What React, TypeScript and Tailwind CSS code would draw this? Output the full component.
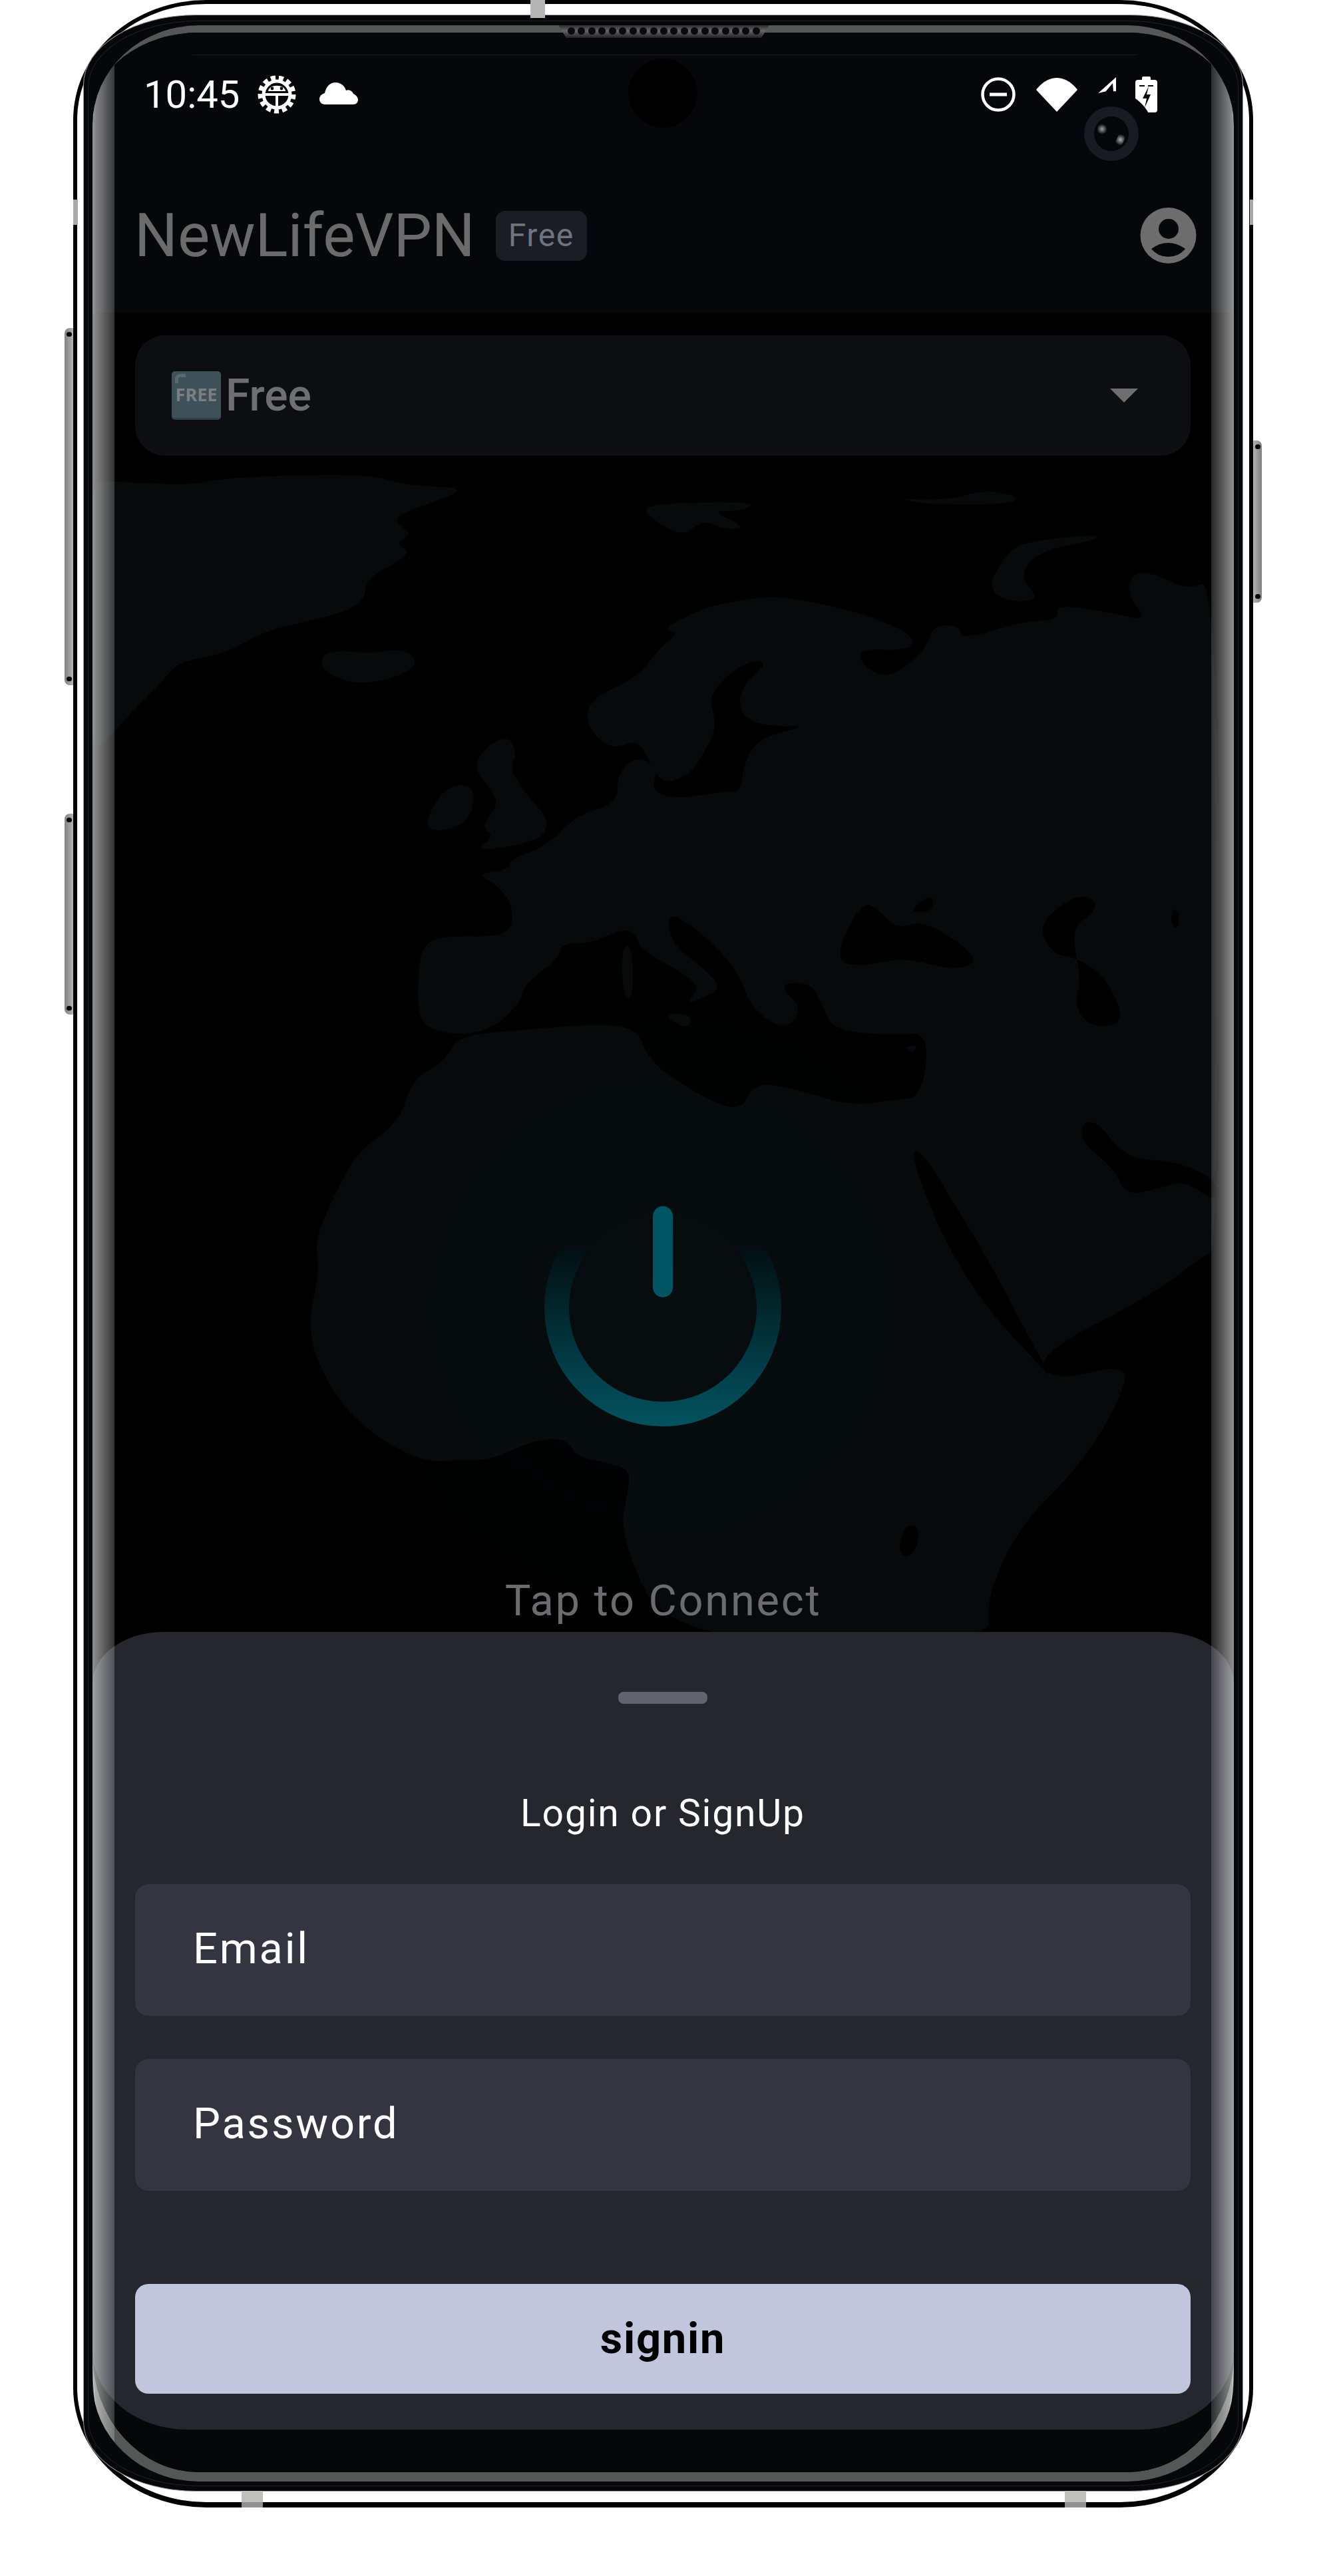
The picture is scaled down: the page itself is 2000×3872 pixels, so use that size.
import React from "react";

const LAND = [
  "632,1422 666,1406 766,1409 772,1364 749,1332 716,1313 766,1307 766,1291 822,1272 867,1224 928,1208 928,1160 961,1135 989,1160 978,1186 1012,1202 1090,1189 1112,1192 1118,1147 1140,1109 1218,1090 1157,1093 1112,1077 1112,1033 1157,994 1118,994 1062,1045 1079,1090 1056,1135 1034,1167 989,1179 961,1109 922,1128 883,1096 883,1052 961,1017 989,975 1023,950 995,947 1034,924 1079,908 1157,895",
  "1224,905 1313,927 1374,956 1369,978 1285,975 1302,1007 1335,1017 1363,1001 1391,975 1402,940 1441,940 1447,962 1536,934 1592,931 1586,908 1670,921 1726,934 1692,892 1704,857 1748,867 1782,886 1830,870",
  "1830,1876 1807,1889 1725,1950 1558,2036 1582,2077 1697,2048 1682,2106 1625,2201 1529,2297 1481,2406 1491,2470",
  "1006,2470 930,2306 945,2235 945,2209 915,2199 865,2189 853,2163 807,2163 738,2194 700,2194 630,2198 534,2138 481,2061 462,1991 481,1908 472,1864 510,1781 539,1730 601,1685 620,1621 668,1596 687,1557",
  "783,1548 955,1535 974,1596 1051,1647 1113,1672 1132,1628 1185,1634 1280,1663 1343,1653 1385,1650 1397,1552",
  "1341,1556 1252,1549 1235,1510 1218,1476 1168,1479 1207,1517 1179,1549 1129,1517 1107,1454 1040,1390 1001,1371 1010,1420 1056,1454 1085,1485 1056,1500 1030,1510 1056,1479 962,1428 956,1403 934,1396 889,1418 844,1418 839,1441 788,1479 783,1505 738,1549 677,1556 632,1540 627,1498",
].join(" ");

const ISLANDS = [
  "130,723 172,723 286,730 342,717 554,712 610,730 710,733 621,765 588,781 621,803 593,816 621,832 549,870 549,902 509,924 398,947 342,982 269,994 242,1026 197,1071 172,1100 130,1140",
  "487,982 515,978 554,982 610,975 629,998 599,1017 543,1029 498,1017 481,998",
  "961,762 1023,755 1140,755 1112,768 1068,768 1123,793 1090,797 1056,781 1028,806 989,787",
  "1347,749 1425,752 1480,736 1531,746 1519,758 1391,758",
  "1653,803 1642,813 1559,829 1531,867 1564,902 1514,905 1483,883 1514,829 1547,813",
  "766,1106 733,1119 710,1154 738,1186 749,1211 722,1243 744,1256 710,1281 811,1265 827,1233 788,1192 766,1154 777,1135",
  "677,1179 716,1182 705,1240 638,1253 649,1211",
  "995,1524 1040,1524 1034,1549",
  "934,1422 950,1422 952,1500 936,1500",
  "1358,1574 1380,1570 1372,1584",
];

const SEAS = [
  "1296,1352 1252,1441 1291,1454 1358,1438 1436,1460 1475,1441 1391,1383 1347,1396 1324,1371",
  "1363,1371 1402,1342 1402,1371",
  "1614,1345 1648,1352 1642,1374 1609,1396 1625,1473 1614,1511 1637,1543 1692,1540 1665,1473 1620,1440 1581,1434 1559,1390",
  "1760,1365 1772,1370 1770,1396 1760,1392",
  "1625,1688 1649,1685 1692,1742 1768,1745 1830,1775 1830,1809 1778,1774 1740,1787 1692,1797 1673,1755 1625,1717",
  "1366,1730 1386,1730 1443,1825 1486,1895 1553,2023 1582,2074 1558,2048 1481,1965 1414,1857",
];

// Rounds the rough coastline: each vertex becomes a curve between edge midpoints.
function smooth(points: string) {
  const p = points.trim().split(/\s+/).map((s) => s.split(",").map(Number));
  const mid = (a: number[], b: number[]) => [(a[0] + b[0]) / 2, (a[1] + b[1]) / 2];
  const start = mid(p[p.length - 1], p[0]);
  let d = `M${start[0]} ${start[1]}`;
  p.forEach((v, i) => {
    const m = mid(v, p[(i + 1) % p.length]);
    d += `Q${v[0]} ${v[1]} ${m[0]} ${m[1]}`;
  });
  return d + "Z";
}

function Gear() {
  return (
    <svg width="58" height="58" viewBox="0 0 58 58" className="ml-[27px] shrink-0">
      <circle cx="29" cy="29" r="25" fill="none" stroke="#fff" strokeWidth="7" strokeDasharray="7 5" />
      <circle cx="29" cy="29" r="20" fill="none" stroke="#fff" strokeWidth="5" />
      <path d="M11 29H47M29 29V48" stroke="#fff" strokeWidth="4" fill="none" />
      <path d="M16 24C17 13 41 13 42 24Z" fill="#fff" />
      <circle cx="22" cy="20" r="2.4" fill="#06070a" />
      <circle cx="36" cy="20" r="2.4" fill="#06070a" />
    </svg>
  );
}

function Cloud() {
  return (
    <svg width="58" height="33" viewBox="0 0 58 33" className="ml-[35px] mt-[-3px] shrink-0">
      <path
        d="M8 33C3 33 0 29 0 25C0 20 4 17 8 16C10 6 16 0 24 0C32 0 38 5 40 12C44 10 49 12 51 17C55 19 58 22 58 26C58 30 55 33 51 33Z"
        fill="#fff"
      />
    </svg>
  );
}

function Dnd() {
  return (
    <svg width="52" height="52" viewBox="0 0 52 52" className="shrink-0">
      <circle cx="26" cy="26" r="23.5" fill="none" stroke="#fff" strokeWidth="4.5" />
      <rect x="13" y="23.5" width="26" height="5" fill="#fff" />
    </svg>
  );
}

function Wifi() {
  return (
    <svg width="62" height="52" viewBox="0 0 62 52" className="ml-[31px] shrink-0">
      <path d="M31 52L0 19C2 16 14 1 31 1C48 1 60 16 62 19Z" fill="#fff" />
    </svg>
  );
}

function Signal() {
  return (
    <svg width="29" height="26" viewBox="0 0 29 26" className="ml-[29px] mb-[26px] shrink-0">
      <path d="M29 0L0 26L13 22L24 9L25 22H29Z" fill="#fff" />
    </svg>
  );
}

function Battery() {
  return (
    <svg width="33" height="54" viewBox="0 0 33 54" className="ml-[29px] shrink-0">
      <rect x="10" y="0" width="13" height="7" rx="2" fill="#fff" />
      <rect x="0" y="5" width="33" height="49" rx="4" fill="#fff" />
      <path d="M6 14H14M19 14H27" stroke="#06070a" strokeWidth="2" />
      <path d="M20 15L11 33H17L14 47L23 27H17Z" fill="#06070a" />
    </svg>
  );
}

function Profile() {
  return (
    <svg width="85" height="84" viewBox="0 0 85 84" className="shrink-0">
      <circle cx="42.5" cy="42" r="42" fill="#6d6d6d" />
      <circle cx="43" cy="32" r="15" fill="#06070a" />
      <path d="M17 62Q42 44 68 62Q58 74 42 74Q27 74 17 62Z" fill="#06070a" />
    </svg>
  );
}

function Power() {
  return (
    <svg width="358" height="356" viewBox="0 0 358 356" className="mt-[1103px] ml-[-1px] shrink-0">
      <defs>
        <linearGradient id="ring" gradientUnits="userSpaceOnUse" x1="0" y1="0" x2="0" y2="356">
          <stop offset="0" stopColor="#021012" stopOpacity="0" />
          <stop offset="0.24" stopColor="#021012" stopOpacity="0" />
          <stop offset="0.26" stopColor="#021012" />
          <stop offset="0.5" stopColor="#02262c" />
          <stop offset="0.8" stopColor="#02424d" />
          <stop offset="1" stopColor="#02535f" />
        </linearGradient>
      </defs>
      <circle cx="179" cy="178" r="159.5" fill="none" stroke="url(#ring)" strokeWidth="37" />
      <rect x="164" y="25" width="30" height="137" rx="15" fill="#005562" />
    </svg>
  );
}

function Field({ label, className }: { label: string; className?: string }) {
  return (
    <div
      className={
        "h-[198px] rounded-[20px] bg-[#343541] flex items-center pl-[87px] text-[65px] tracking-[2.8px] text-white " +
        (className ?? "")
      }
    >
      <span className="mt-[-2px]">{label}</span>
    </div>
  );
}

export default function App() {
  return (
    <div className="relative w-[2000px] h-[3872px] bg-white overflow-hidden font-[Roboto,sans-serif]">
      <div className="relative ml-[110px] w-[1773px] h-[3769px] box-border border-t-[6px] border-x-[6px] border-b-[8px] border-black rounded-[200px/180px] bg-white px-[9px] pt-[16px] pb-[16px]">
        <div className="h-full box-border rounded-[170px/105px] border border-[#9a9a9a] bg-[#06070a] px-[6px] pt-[8px] pb-[7px]">
          <div className="h-full box-border rounded-[165px/100px] border border-[#241f24] px-[6px] pt-[6px] pb-[6px]">
            {/* Glass */}
            <div className="relative h-full box-border overflow-hidden rounded-[160px/150px] bg-[#555756] pt-[11px] pb-[14px]">
              {/* Screen */}
              <div className="relative isolate h-full overflow-hidden flex flex-col bg-black rounded-tl-[160px_124px] rounded-tr-[160px_124px] rounded-bl-[160px_178px] rounded-br-[160px_178px]">
                {/* Map */}
                <svg width="1715" height="3667" viewBox="139 49 1715 3667" className="absolute left-0 top-0">
                  <path d={smooth(LAND)} fill="#060a0b" />
                  {ISLANDS.map((p) => (
                    <path key={p} d={smooth(p)} fill="#060a0b" />
                  ))}
                  {SEAS.map((p) => (
                    <path key={p} d={smooth(p)} fill="#000" />
                  ))}
                  <ellipse cx="1366" cy="2316" rx="13" ry="24" fill="#000" transform="rotate(15 1366 2316)" />
                </svg>
                {/* Glow */}
                <div className="absolute left-[357px] top-[1417px] w-[1000px] h-[1000px] rounded-full bg-[radial-gradient(circle,rgba(0,70,80,0.05),transparent_70%)]" />

                {/* Header */}
                <header className="relative h-[421px] shrink-0 bg-[#06070a] pt-[43px]">
                  <div className="flex h-[100px] items-center justify-between pl-[77px] pr-[115px]">
                    <div className="flex items-center">
                      <span className="text-[58px] leading-[100px] text-white">10:45</span>
                      <Gear />
                      <Cloud />
                    </div>
                    <div className="flex items-center">
                      <Dnd />
                      <Wifi />
                      <Signal />
                      <Battery />
                    </div>
                  </div>
                  <div className="mt-[112px] flex h-[100px] items-center pl-[63px] pr-[56px]">
                    <span className="text-[91px] leading-[100px] text-[#6b6b6b]">NewLifeVPN</span>
                    <span className="ml-[31px] flex h-[75px] w-[137px] items-center justify-center rounded-[14px] bg-[#1a1d24] text-[48px] tracking-[1.6px] text-[#6f7480]">
                      Free
                    </span>
                    <span className="ml-auto">
                      <Profile />
                    </span>
                  </div>
                </header>

                {/* Server dropdown */}
                <div className="relative mt-[34px] ml-[64px] mr-[65px] flex h-[181px] shrink-0 items-center rounded-[45px] bg-[#0d0e12] pl-[55px] pr-[79px]">
                  <div className="relative flex h-[73px] w-[74px] shrink-0 items-center justify-center overflow-hidden rounded-[5px] border-b-[3px] border-[#30424a] bg-[#3f5158] text-[27px] font-bold font-['Noto_Sans',sans-serif] text-[#7b7f7f]">
                    <span className="absolute left-[5px] top-[4px] h-[14px] w-[16px] rounded-tl-[8px] border-l-[5px] border-t-[5px] border-[#566a70]" />
                    FREE
                  </div>
                  <span className="ml-[7px] text-[66px] font-medium text-[#6f6f73]">Free</span>
                  <svg width="42" height="21" viewBox="0 0 42 21" className="ml-auto shrink-0">
                    <path d="M0 0H42L21 21Z" fill="#6f6f6f" />
                  </svg>
                </div>

                {/* Main */}
                <main className="relative flex flex-1 flex-col items-center">
                  <Power />
                  <p className="mt-[222px] text-[65px] leading-[80px] tracking-[2.7px] text-[#6b6b70]">
                    Tap to Connect
                  </p>
                </main>

                {/* Sheet */}
                <section className="relative z-10 h-[1199px] shrink-0 box-border rounded-tl-[107px_77px] rounded-tr-[107px_77px] rounded-bl-[143px_119px] rounded-br-[143px_119px] bg-[#25262e] pl-[64px] pr-[65px] pt-[90px]">
                  <div className="mx-auto h-[18px] w-[134px] rounded-[8px] bg-[#62636d]" />
                  <h2 className="mt-[135px] h-[60px] text-center text-[57px] font-normal leading-[60px] tracking-[1.8px] text-white">
                    Login or SignUp
                  </h2>
                  <Field label="Email" className="mt-[76px]" />
                  <Field label="Password" className="mt-[65px]" />
                  <button className="mt-[140px] flex h-[165px] w-full items-center justify-center rounded-[20px] bg-[#c1c6dd] text-[65px] font-bold tracking-[1.8px] text-black">
                    signin
                  </button>
                </section>
                <div className="mt-[-119px] h-[183px] shrink-0 bg-[#060709]" />

                <div className="absolute left-[150px] right-[145px] top-[33px] h-px bg-[#17181c]" />
                <div className="absolute left-[805px] top-[39px] h-[104px] w-[104px] rounded-full bg-black" />
                <div className="absolute left-[1467px] top-[88px] flex h-[128px] w-[128px] items-center justify-center rounded-full bg-[#05060a]">
                  <div className="relative flex h-[82px] w-[82px] items-center justify-center rounded-full bg-[#1a1b22]">
                    <div className="relative h-[52px] w-[52px] rounded-full bg-[#05060a]">
                      <div className="absolute left-[5px] top-[11px] h-[16px] w-[14px] rounded-full bg-[radial-gradient(circle,#a0a0a0,transparent_75%)]" />
                      <div className="absolute left-[34px] top-[25px] h-[20px] w-[11px] rotate-[25deg] rounded-full bg-[radial-gradient(circle,#b0b0b0,transparent_75%)]" />
                    </div>
                  </div>
                </div>
              </div>

              {/* Bevels */}
              <div className="absolute left-0 top-[52px] bottom-[48px] w-[33px] border-l border-white/50 bg-gradient-to-r from-white/55 to-white/20 rounded-tl-[33px_100px] rounded-bl-[33px_130px]" />
              <div className="absolute right-0 top-[52px] bottom-[48px] w-[34px] border-r border-white/50 bg-gradient-to-l from-white/55 to-white/15 rounded-tr-[34px_100px] rounded-br-[34px_130px]" />

              {/* Speaker */}
              <div className="absolute left-[699px] top-[-2px] flex h-[21px] w-[319px] items-center justify-between bg-gradient-to-b from-[#222] via-[#666] to-[#222] px-[15px] [clip-path:polygon(0_0,100%_0,96%_100%,4%_100%)]">
                {Array.from({ length: 19 }).map((_, i) => (
                  <span key={i} className="h-[11px] w-[11px] rounded-full bg-[#0a0a0c]" />
                ))}
              </div>
            </div>
          </div>
        </div>

        {/* Frame tabs */}
        <div className="absolute left-[681px] top-[-6px] h-[27px] w-[22px] bg-[#b4b5b4]" />
        <div className="absolute left-[-6px] top-[294px] h-[38px] w-[7px] bg-[#a8a8a8]" />
        <div className="absolute right-[-6px] top-[294px] h-[38px] w-[5px] bg-[#a8a8a8]" />
        <div className="absolute left-[247px] bottom-[-8px] h-[25px] w-[32px] bg-[linear-gradient(#bfbfbb_66%,#909090_66%)]" />
        <div className="absolute left-[1484px] bottom-[-8px] h-[25px] w-[32px] bg-[linear-gradient(#bfbfbb_66%,#909090_66%)]" />

        {/* Side buttons */}
        <div className="absolute left-[-19px] top-[487px] flex h-[537px] w-[13px] flex-col items-center justify-between rounded-l-[8px] bg-gradient-to-r from-[#808080] to-[#b4b4b4] py-[6px]">
          <span className="h-[7px] w-[8px] rounded-full bg-black" />
          <span className="h-[7px] w-[8px] rounded-full bg-black" />
        </div>
        <div className="absolute left-[-19px] top-[1217px] flex h-[302px] w-[13px] flex-col items-center justify-between rounded-l-[8px] bg-gradient-to-r from-[#808080] to-[#b4b4b4] py-[6px]">
          <span className="h-[7px] w-[8px] rounded-full bg-black" />
          <span className="h-[7px] w-[8px] rounded-full bg-black" />
        </div>
        <div className="absolute right-[-19px] top-[656px] flex h-[244px] w-[13px] flex-col items-center justify-between rounded-r-[8px] bg-gradient-to-l from-[#808080] to-[#b4b4b4] py-[6px]">
          <span className="h-[7px] w-[8px] rounded-full bg-black" />
          <span className="h-[7px] w-[8px] rounded-full bg-black" />
        </div>
      </div>
    </div>
  );
}
